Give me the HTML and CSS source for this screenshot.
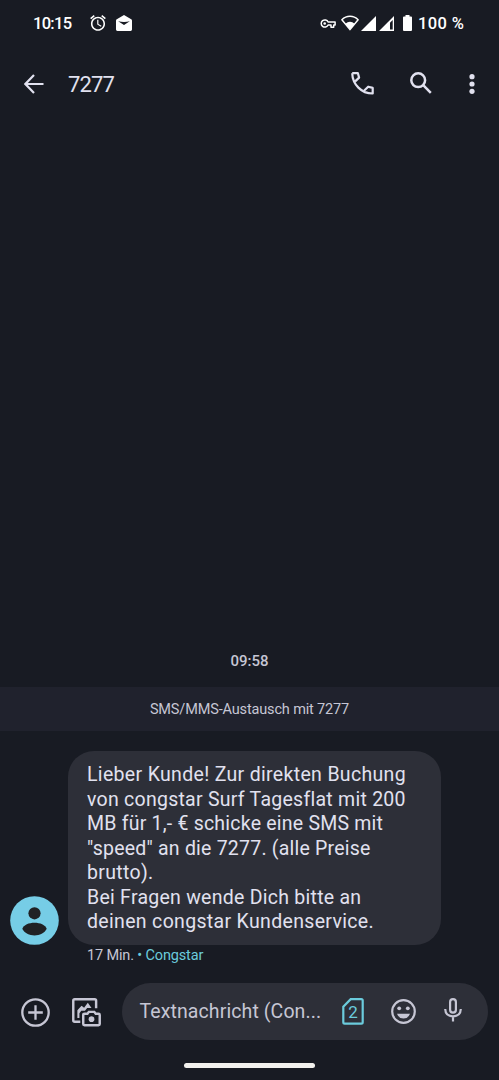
FILE: index.html
```html
<!DOCTYPE html>
<html lang="de">
<head>
<meta charset="utf-8">
<title>7277</title>
<link rel="stylesheet" href="styles.css">
</head>
<body>
<div class="screen">
  <div class="status">
    <span class="clock">10:15</span>
    <svg class="alarm" width="16" height="16" viewBox="2 1.8 20 20.4"><path d="M22 5.72l-4.6-3.86-1.29 1.53 4.6 3.86L22 5.72zM7.88 3.39L6.6 1.86 2 5.71l1.29 1.53 4.59-3.85zM12.5 8H11v6l4.75 2.85.75-1.23-4-2.37V8zM12 4c-4.97 0-9 4.03-9 9s4.02 9 9 9c4.97 0 9-4.03 9-9s-4.03-9-9-9zm0 16c-3.87 0-7-3.13-7-7s3.13-7 7-7 7 3.13 7 7-3.13 7-7 7z"/></svg>
    <svg class="mail" width="16" height="16" viewBox="0 0 16 16"><path fill-rule="evenodd" d="M8 0L15.200 4.300Q16 4.800 16 5.700V14.600Q16 16 14.600 16H1.400Q0 16 0 14.600V5.700Q0 4.800.8 4.300ZM2.200 6.200L8 10L13.800 6.200Q8 7.600 2.200 6.200Z"/></svg>
    <div class="status-right">
      <svg class="key" width="16" height="11" viewBox="0 0 16 11"><path d="M8.100 4A3.600 3.600 0 1 0 8.100 7H11V9.200H13.700V7H15.100V4Z" fill="none" stroke="#fff" stroke-width="1.500" stroke-linejoin="round"/><circle cx="4.700" cy="5.500" r="1.300"/></svg>
      <svg class="wifi" width="18" height="16" viewBox="0 0 18 16"><path d="M.9 4.700C5.500.1 12.500.1 17.100 4.700L9 14.600Z" fill="none" stroke="#fff" stroke-width="1.500" stroke-linejoin="round"/><path d="M4.300 8.800Q9 4.900 13.700 8.800L9 14.600Z"/></svg>
      <svg class="sig" width="15" height="15" viewBox="0 0 15 15"><path d="M15 0V15H0Z"/></svg>
      <svg class="sig2" width="15" height="15" viewBox="0 0 15 15"><path fill-rule="evenodd" d="M15 0V15H0ZM13.700 4L11 6.700V13.600H13.700Z"/></svg>
      <svg class="battery" width="9" height="16" viewBox="0 0 9 16"><path d="M2.500 0H6.500V1.500H8Q9 1.500 9 2.500V15Q9 16 8 16H1Q0 16 0 15V2.500Q0 1.500 1 1.500H2.500Z"/></svg>
      <span class="percent">100 %</span>
    </div>
  </div>

  <header class="appbar">
    <svg class="back" width="20" height="20" viewBox="0 0 20 20"><path d="M10 1L1.400 10L10 19M1.400 10H19.500"/></svg>
    <h1 class="title">7277</h1>
    <svg class="call" width="23" height="23" viewBox="0 0 23 23"><path d="M1.200 1.200H6.900L8.100 5.600L4.200 9.400M1.200 1.200C1.600 12.500 10.500 21.600 21.700 21.500V15.900L17.200 14.700L13.300 18.500"/></svg>
    <svg class="search" width="22" height="22" viewBox="0 0 22 22"><circle cx="8.200" cy="8.200" r="6.900"/><path d="M13.200 13.200L20.800 20.800"/></svg>
    <svg class="more" width="6" height="20" viewBox="0 0 6 20"><circle cx="3" cy="2.700" r="2.600"/><circle cx="3" cy="10" r="2.600"/><circle cx="3" cy="17.300" r="2.600"/></svg>
  </header>

  <main class="thread">
    <div class="time">09:58</div>
    <div class="notice"><span>SMS/MMS-Austausch mit 7277</span></div>
    <div class="message">
      <svg class="avatar" width="49" height="49" viewBox="0 0 49 49"><circle cx="24.500" cy="24.500" r="24.300" fill="#76cde6"/><circle cx="24.500" cy="17.300" r="6.100" fill="#202124"/><path d="M12.300 32.800C14.700 24.600 34.300 24.600 36.700 32.800C32.500 41.600 16.500 41.600 12.300 32.800Z" fill="#202124"/></svg>
      <div class="bubble">
        <span class="wide">Lieber Kunde! Zur direkten Buchung</span>
        <span>von congstar Surf Tagesflat mit 200</span>
        <span class="tight">MB für 1,- € schicke eine SMS mit</span>
        <span class="tight">"speed" an die 7277. (alle Preise</span>
        <span class="wide">brutto).</span>
        <span>Bei Fragen wende Dich bitte an</span>
        <span class="wide">deinen congstar Kundenservice.</span>
      </div>
    </div>
    <div class="meta">17 Min. <span class="sim-name">• Congstar</span></div>
  </main>

  <footer class="composer">
    <svg class="plus" width="29" height="29" viewBox="0 0 29 29"><circle cx="14.500" cy="14.500" r="13.200"/><path d="M14.500 7.200V21.800M7.200 14.500H21.800"/></svg>
    <svg class="gallery" width="29" height="29" viewBox="0 0 29.700 29.700"><path d="M8.500 24.300H2.800Q1.300 24.300 1.300 22.800V2.800Q1.300 1.300 2.800 1.300H23.200Q24.700 1.300 24.700 2.800V10.500" fill="none" stroke="#c6c6d4" stroke-width="2.500"/><path d="M5.500 20.500V12.600L9.800 8L12.400 10L16.200 4.800L20 10.200H15.500L13.300 13H9.500L7.600 15.500V20.500Z"/><path d="M12.500 16.200H15.800L17.300 14.200H22.800L24.300 16.200H27.100Q28.400 16.200 28.400 17.500V26.700Q28.400 28 27.100 28H12.800Q11.500 28 11.500 26.700V17.500Q11.500 16.200 12.800 16.200Z" fill="none" stroke="#c6c6d4" stroke-width="2.500"/><circle cx="20" cy="21.700" r="2.900"/></svg>
    <div class="field">
      <span class="placeholder">Textnachricht (Con...</span>
      <div class="sim"><svg width="22" height="27" viewBox="0 0 22 27"><path d="M8.700 1.200H19.300Q20.700 1.200 20.700 2.600V24.300Q20.700 25.700 19.300 25.700H2.700Q1.300 25.700 1.300 24.300V8.700Z"/></svg><span>2</span></div>
      <svg class="smile" width="25" height="25" viewBox="0 0 25 25"><circle cx="12.500" cy="12.500" r="11.300" fill="none" stroke="#c6c6d4" stroke-width="2.200"/><circle cx="8.200" cy="9.300" r="1.900"/><circle cx="16.800" cy="9.300" r="1.900"/><path d="M6 14.700H19Q17.500 19.500 12.500 19.500T6 14.700Z"/></svg>
      <svg class="mic" width="18" height="24" viewBox="0 0 18 24"><rect x="6.100" y="1.100" width="5.800" height="13.500" rx="2.900"/><path d="M1.200 11Q1.500 18.300 9 18.300T16.800 11M9 18.300V23.500"/></svg>
    </div>
  </footer>
  <div class="nav"><div class="handle"></div></div>
</div>
</body>
</html>
```
FILE: styles.css
```css
* { box-sizing: border-box; }
body { margin: 0; background: #181b23; font-family: Roboto, "Liberation Sans", sans-serif; }
svg { display: block; flex: none; }
.screen { width: 499px; height: 1080px; display: flex; flex-direction: column; overflow: hidden; white-space: nowrap; }

.status { height: 46px; display: flex; align-items: center; padding-left: 33px; color: #fff; fill: #fff; font-size: 16.500px; font-weight: 500; }
.clock { width: 57px; letter-spacing: -.7px; }
.mail { margin-left: 10px; }
.status-right { display: flex; align-items: center; margin-left: auto; padding-right: 34px; }
.wifi { margin-left: 5px; }
.sig { margin-left: 2px; }
.sig2 { margin-left: 3px; }
.battery { margin-left: 9px; }
.percent { margin-left: 6px; width: 47px; letter-spacing: .4px; }

.appbar { height: 76px; display: flex; align-items: center; padding: 0 24px; fill: #e1e1ef; }
.back { stroke: #e1e1ef; stroke-width: 2.200px; fill: none; }
.title { margin: 0 0 0 24px; width: 283px; font-size: 22px; font-weight: 400; letter-spacing: -.9px; color: #e1e1ef; }
.call { margin-top: -1px; fill: none; stroke: #e1e1ef; stroke-width: 2.200px; stroke-linejoin: round; }
.search { margin: -2px 0 0 36px; fill: none; stroke: #e1e1ef; stroke-width: 2.500px; }
.more { margin-left: 37.500px; }

.thread { flex: 1; display: flex; flex-direction: column; justify-content: flex-end; }
.time { text-align: center; font-size: 15px; line-height: 20px; font-weight: 500; color: #c6c6d4; margin-bottom: 16px; }
.notice { height: 44px; display: flex; align-items: center; justify-content: center; background: #20222d; color: #c6c6d4; font-size: 14.500px; letter-spacing: -.15px; }
.message { display: flex; align-items: flex-end; gap: 9.500px; padding: 20px 0 0 9.500px; }
.bubble { width: 373px; height: 194px; padding: 12px 19px 10px; border-radius: 26px; background: #2d2f38; color: #e1e1ef; font-size: 19.500px; line-height: 24.500px; letter-spacing: .26px; }
.bubble span { display: block; }
.bubble .wide { letter-spacing: .33px; }
.bubble .tight { letter-spacing: .22px; }
.meta { padding-left: 87px; height: 38px; line-height: 22px; font-size: 14.500px; letter-spacing: -.15px; color: #c6c6d4; }
.sim-name { color: #6bcbdc; }

.composer { height: 57px; display: flex; align-items: center; padding-left: 20.500px; fill: #c6c6d4; }
.plus { fill: none; stroke: #c6c6d4; stroke-width: 2.300px; margin-top: 1px; }
.gallery { margin: 1px 0 0 22px; }
.field { margin-left: 21.500px; width: 366px; height: 57px; border-radius: 29px; background: #2d2f38; display: flex; align-items: center; padding-left: 17.500px; }
.placeholder { width: 202.500px; color: #c6c6d4; font-size: 19.500px; letter-spacing: .1px; }
.sim { display: grid; place-items: center; color: #6bcbdc; }
.sim > * { grid-area: 1 / 1; }
.sim svg { fill: none; stroke: #6bcbdc; stroke-width: 2.200px; }
.sim span { font-size: 17px; }
.smile { margin-left: 26.500px; }
.mic { margin: -3px 0 0 28px; fill: none; stroke: #c6c6d4; stroke-width: 2.200px; }
.nav { height: 40px; display: flex; justify-content: center; padding-top: 23px; }
.handle { width: 131px; height: 5px; border-radius: 3px; background: #f2f1ee; }
```
